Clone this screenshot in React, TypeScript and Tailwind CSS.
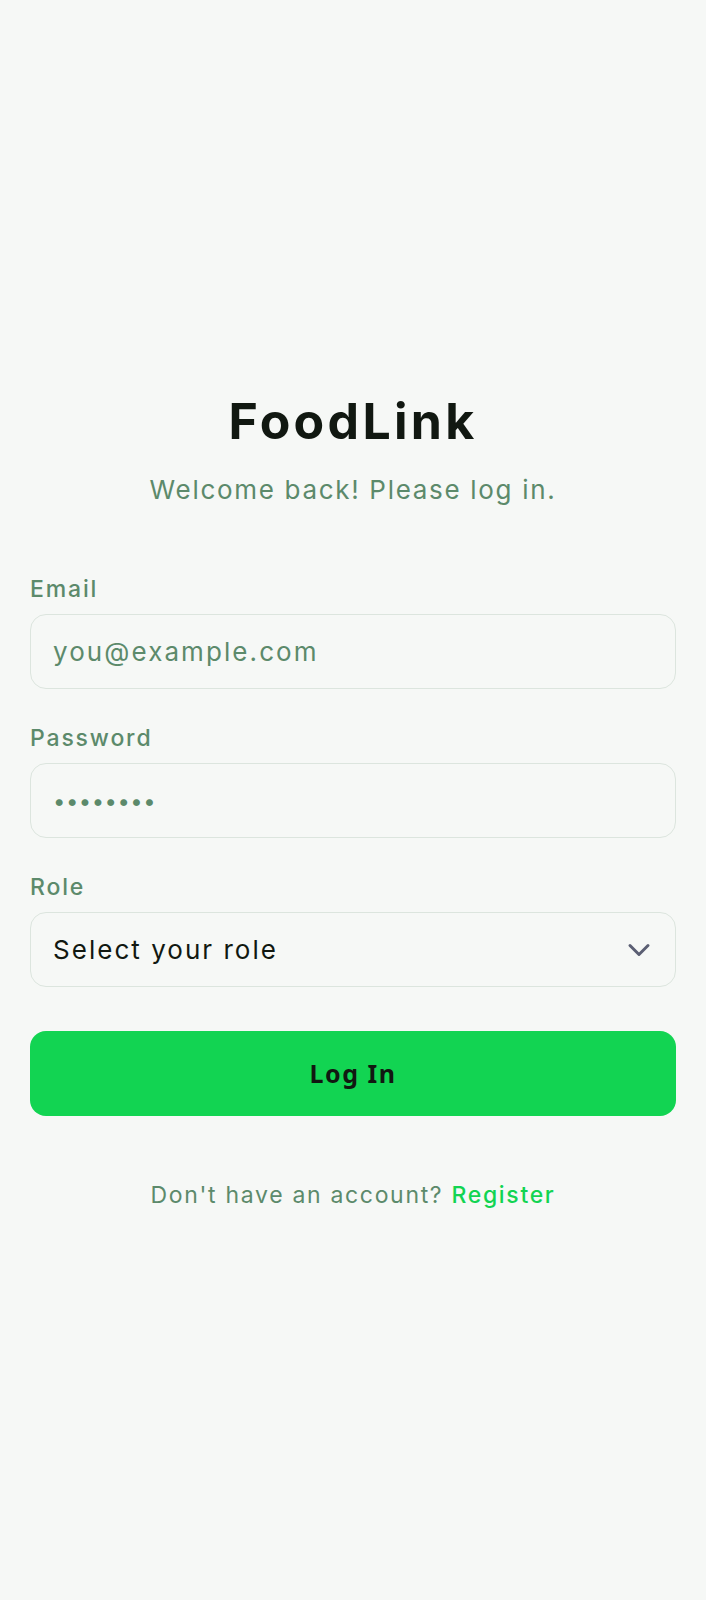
import { ChevronDown } from "lucide-react"

const App = () => {
  const labelClass =
    "h-[28px] text-[23px] leading-[28px] font-medium tracking-[0.08em] text-[#5c8a6b]"
  const inputClass =
    "h-[75px] w-full rounded-[16px] border border-[#dce5de] bg-[#f6f8f6] px-[22px] text-[26px] tracking-[0.08em] text-[#111811] placeholder:text-[#5c8a6b] outline-none"

  return (
    <div className="min-h-screen bg-[#f6f8f6] flex items-center justify-center px-[30px] font-['Inter',sans-serif]">
      <div className="w-full">
        {/* Header */}
        <div className="text-center">
          <h1 className="h-[60px] text-[50px] leading-[60px] font-bold tracking-[0.066em] text-[#111811]">FoodLink</h1>
          <p className="mt-[23px] h-[32px] text-[26px] leading-[32px] tracking-[0.065em] text-[#5c8a6b]">
            Welcome back! Please log in.
          </p>
        </div>

        {/* Form */}
        <form className="mt-[69px] flex flex-col">
          <div className="flex flex-col gap-[11px]">
            <label className={labelClass}>Email</label>
            <input type="email" placeholder="you@example.com" className={inputClass} />
          </div>

          <div className="mt-[35px] flex flex-col gap-[11px]">
            <label className={labelClass}>Password</label>
            <input
              type="password"
              placeholder="••••••••"
              className="h-[75px] w-full rounded-[16px] border border-[#dce5de] bg-[#f6f8f6] px-[22px] text-[22px] tracking-[0.5px] text-[#111811] placeholder:text-[#5c8a6b] outline-none"
            />
          </div>

          <div className="mt-[35px] flex flex-col gap-[11px]">
            <label className={labelClass}>Role</label>
            <div className="relative">
              <select className="h-[75px] w-full appearance-none rounded-[16px] border border-[#dce5de] bg-[#f6f8f6] px-[22px] text-[26px] tracking-[0.078em] text-[#111811] outline-none">
                <option>Select your role</option>
                <option>Donor</option>
                <option>Recipient</option>
              </select>
              <ChevronDown
                className="pointer-events-none absolute right-[19px] top-1/2 -translate-y-1/2 text-[#5b5f73]"
                size={36}
                strokeWidth={2}
              />
            </div>
          </div>

          <button
            type="button"
            className="mt-[44px] h-[85px] w-full rounded-[16px] bg-[#12d452] text-[25px] font-bold tracking-[1.5px] text-[#111811] font-['Noto_Sans',sans-serif]"
          >
            Log In
          </button>
        </form>

        <p className="mt-[65px] h-[28px] text-center text-[23px] leading-[28px] tracking-[0.073em] text-[#5c8a6b]">
          Don't have an account?{" "}
          <a href="#" className="font-medium text-[#12d452]">Register</a>
        </p>
      </div>
    </div>
  )
}

export default App
